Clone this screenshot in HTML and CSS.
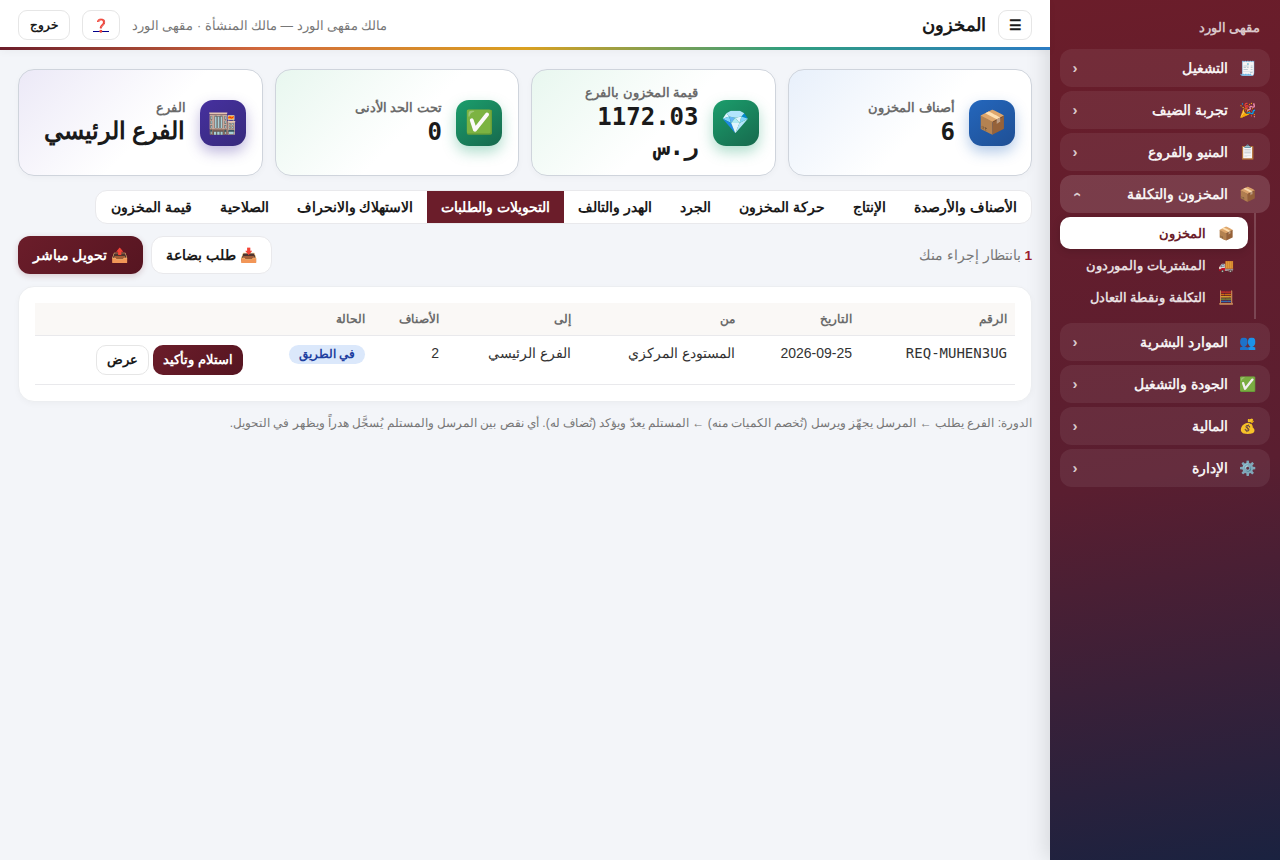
FILE: index.html
```html
<!DOCTYPE html>
<html lang="ar" dir="rtl">
<head>
    <meta charset="UTF-8">
    <meta name="viewport" content="width=device-width, initial-scale=1.0">
    <title>المخزون</title>
    <link rel="stylesheet" href="styles.css">
</head>
<body>
    <aside class="sidebar">
        <div class="brand">مقهى الورد</div>
        <nav class="nav">
            <div class="nav-group"><span class="nav-icon">🧾</span><span class="nav-label">التشغيل</span><span class="chev">‹</span></div>
            <div class="nav-group"><span class="nav-icon">🎉</span><span class="nav-label">تجربة الضيف</span><span class="chev">‹</span></div>
            <div class="nav-group"><span class="nav-icon">📋</span><span class="nav-label">المنيو والفروع</span><span class="chev">‹</span></div>
            <div class="nav-group open"><span class="nav-icon">📦</span><span class="nav-label">المخزون والتكلفة</span><span class="chev up">‹</span></div>
            <div class="subnav">
                <div class="sub-item active"><span class="sub-icon">📦</span><span>المخزون</span></div>
                <div class="sub-item"><span class="sub-icon">🚚</span><span>المشتريات والموردون</span></div>
                <div class="sub-item"><span class="sub-icon">🧮</span><span>التكلفة ونقطة التعادل</span></div>
            </div>
            <div class="nav-group"><span class="nav-icon">👥</span><span class="nav-label">الموارد البشرية</span><span class="chev">‹</span></div>
            <div class="nav-group"><span class="nav-icon">✅</span><span class="nav-label">الجودة والتشغيل</span><span class="chev">‹</span></div>
            <div class="nav-group"><span class="nav-icon">💰</span><span class="nav-label">المالية</span><span class="chev">‹</span></div>
            <div class="nav-group"><span class="nav-icon">⚙️</span><span class="nav-label">الإدارة</span><span class="chev">‹</span></div>
        </nav>
    </aside>

    <div class="main">
        <header class="topbar">
            <button class="top-btn menu-btn">☰</button>
            <h1 class="page-title">المخزون</h1>
            <div class="topbar-end">
                <span class="user-line">مالك مقهى الورد — مالك المنشأة · مقهى الورد</span>
                <a class="top-btn help-btn" href="#">❓</a>
                <button class="top-btn logout-btn">خروج</button>
            </div>
        </header>

        <main class="content">
            <section class="stats">
                <div class="stat stat-blue">
                    <div class="stat-icon icon-blue">📦</div>
                    <div class="stat-body">
                        <div class="stat-label">أصناف المخزون</div>
                        <div class="stat-value">6</div>
                    </div>
                </div>
                <div class="stat stat-green">
                    <div class="stat-icon icon-green">💎</div>
                    <div class="stat-body">
                        <div class="stat-label">قيمة المخزون بالفرع</div>
                        <div class="stat-value">1172.03 ر.س</div>
                    </div>
                </div>
                <div class="stat stat-green">
                    <div class="stat-icon icon-green">✅</div>
                    <div class="stat-body">
                        <div class="stat-label">تحت الحد الأدنى</div>
                        <div class="stat-value">0</div>
                    </div>
                </div>
                <div class="stat stat-purple">
                    <div class="stat-icon icon-purple">🏬</div>
                    <div class="stat-body">
                        <div class="stat-label">الفرع</div>
                        <div class="stat-value stat-text">الفرع الرئيسي</div>
                    </div>
                </div>
            </section>

            <div class="tabs-row">
                <div class="tabs">
                    <button class="tab">الأصناف والأرصدة</button>
                    <button class="tab">الإنتاج</button>
                    <button class="tab">حركة المخزون</button>
                    <button class="tab">الجرد</button>
                    <button class="tab">الهدر والتالف</button>
                    <button class="tab active">التحويلات والطلبات</button>
                    <button class="tab">الاستهلاك والانحراف</button>
                    <button class="tab">الصلاحية</button>
                    <button class="tab">قيمة المخزون</button>
                </div>
            </div>

            <div class="actions">
                <div class="pending"><strong>1</strong> بانتظار إجراء منك</div>
                <div class="action-btns">
                    <button class="btn btn-light">📥 طلب بضاعة</button>
                    <button class="btn btn-dark">📤 تحويل مباشر</button>
                </div>
            </div>

            <section class="card">
                <table class="table">
                    <thead>
                        <tr>
                            <th class="c-num">الرقم</th>
                            <th class="c-date">التاريخ</th>
                            <th class="c-from">من</th>
                            <th class="c-to">إلى</th>
                            <th class="c-items">الأصناف</th>
                            <th class="c-status">الحالة</th>
                            <th class="c-actions"></th>
                        </tr>
                    </thead>
                    <tbody>
                        <tr>
                            <td class="mono"><bdi>REQ-MUHEN3UG</bdi></td>
                            <td>2026-09-25</td>
                            <td>المستودع المركزي</td>
                            <td>الفرع الرئيسي</td>
                            <td>2</td>
                            <td><span class="badge">في الطريق</span></td>
                            <td>
                                <div class="row-btns">
                                    <button class="sm-btn sm-dark">استلام وتأكيد</button>
                                    <button class="sm-btn sm-light">عرض</button>
                                </div>
                            </td>
                        </tr>
                    </tbody>
                </table>
            </section>

            <p class="note">الدورة: الفرع يطلب ← المرسل يجهّز ويرسل (تُخصم الكميات منه) ← المستلم يعدّ ويؤكد (تُضاف له). أي نقص بين المرسل والمستلم يُسجَّل هدراً ويظهر في التحويل.</p>
        </main>
    </div>
</body>
</html>
```

FILE: styles.css
```css
* {
    box-sizing: border-box;
}

body {
    margin: 0;
    height: 860px;
    overflow: hidden;
    display: flex;
    font-family: "Liberation Sans", sans-serif;
    background-color: #f3f5f9;
    color: #1a1a1a;
}

button {
    font-family: inherit;
}

/* sidebar */
.sidebar {
    width: 230px;
    height: 860px;
    flex-shrink: 0;
    padding: 17px 10px 0;
    background: linear-gradient(170deg, #6b1d2a 0%, #5a1e30 55%, #1a2240 100%);
    box-shadow: -4px 0 20px rgba(0, 0, 0, 0.12);
    color: #fff;
}

.brand {
    height: 22px;
    line-height: 22px;
    margin-bottom: 10px;
    padding-right: 10px;
    font-size: 12.5px;
    font-weight: 700;
    color: rgba(255, 255, 255, 0.75);
}

.nav {
    display: flex;
    flex-direction: column;
    gap: 4px;
}

.nav-group {
    height: 38px;
    display: flex;
    align-items: center;
    padding: 0 14px 0 10px;
    border-radius: 12px;
    background-color: rgba(255, 255, 255, 0.07);
    font-size: 14px;
    font-weight: 700;
    color: rgba(255, 255, 255, 0.95);
}

.nav-group.open {
    background-color: rgba(255, 255, 255, 0.14);
}

.nav-icon {
    width: 16px;
    margin-left: 12px;
    font-size: 14px;
    text-align: center;
}

.nav-label {
    flex: 1;
}

.chev {
    width: 10px;
    padding-bottom: 2px;
    font-size: 15px;
    line-height: 1;
    text-align: center;
    color: rgba(255, 255, 255, 0.75);
}

.chev.up {
    padding-bottom: 0;
    transform: rotate(-90deg);
}

.subnav {
    display: flex;
    flex-direction: column;
    margin: -4px 14px 0 0;
    padding: 4px 6px 6px 0;
    border-right: 2px solid rgba(255, 255, 255, 0.18);
    width: 196px;
}

.sub-item {
    height: 32px;
    display: flex;
    align-items: center;
    padding: 0 14px;
    font-size: 13.4px;
    font-weight: 700;
    white-space: nowrap;
    color: rgba(255, 255, 255, 0.85);
}

.sub-icon {
    width: 16px;
    margin-left: 12px;
    font-size: 13px;
    text-align: center;
}

.sub-item.active {
    background-color: #fff;
    border-radius: 10px;
    color: #6b1d2a;
    box-shadow: 0 2px 8px rgba(0, 0, 0, 0.15);
}

/* top bar */
.main {
    flex: 1;
    min-width: 0;
}

.topbar {
    height: 50px;
    display: flex;
    align-items: center;
    padding: 3px 18px 0;
    background-color: #fff;
    border-bottom: 3px solid;
    border-image: linear-gradient(90deg, #6b1d2a 0%, #d2693c 25%, #daa020 50%, #2f9e7f 75%, #2b7bc4 100%) 1;
    box-shadow: 0 2px 8px rgba(0, 0, 0, 0.04);
}

.top-btn {
    height: 30px;
    display: flex;
    align-items: center;
    justify-content: center;
    background-color: #fff;
    border: 1px solid #e6e6e6;
    border-radius: 9px;
    color: #1a1a1a;
}

.menu-btn {
    width: 34px;
    font-size: 14px;
    font-weight: 700;
    padding: 0;
}

.page-title {
    margin: 0 12px;
    font-size: 18px;
    font-weight: 700;
}

.topbar-end {
    margin-right: auto;
    display: flex;
    align-items: center;
    gap: 12px;
}

.user-line {
    font-size: 12.5px;
    color: #777;
}

.help-btn {
    width: 38px;
    font-size: 13px;
    color: #00008b;
}

.logout-btn {
    width: 52px;
    font-size: 12px;
    font-weight: 700;
    padding: 0;
}

/* content */
.content {
    padding: 19px 18px 0;
}

.stats {
    display: grid;
    grid-template-columns: repeat(4, 1fr);
    gap: 12px;
}

.stat {
    height: 107px;
    display: flex;
    align-items: center;
    gap: 14px;
    padding: 0 16px;
    border: 1px solid #cfd4dc;
    border-radius: 16px;
    box-shadow: 0 2px 6px rgba(0, 0, 0, 0.03);
}

.stat-blue {
    background: linear-gradient(135deg, #e8f0fb 0%, #fff 55%);
}

.stat-green {
    background: linear-gradient(135deg, #e8f7ef 0%, #fff 55%);
}

.stat-purple {
    background: linear-gradient(135deg, #ece9f7 0%, #fff 55%);
}

.stat-icon {
    width: 46px;
    height: 46px;
    flex-shrink: 0;
    display: flex;
    align-items: center;
    justify-content: center;
    border-radius: 13px;
    font-size: 23px;
}

.icon-blue {
    background: linear-gradient(145deg, #2467bd, #1f4f94);
    box-shadow: 0 6px 14px rgba(36, 103, 189, 0.35);
}

.icon-green {
    background: linear-gradient(145deg, #1b9e6c, #17694d);
    box-shadow: 0 6px 14px rgba(27, 158, 108, 0.35);
}

.icon-purple {
    background: linear-gradient(145deg, #46309f, #372a7c);
    box-shadow: 0 6px 14px rgba(70, 48, 159, 0.35);
}

.stat-body {
    min-width: 0;
    flex: 1;
    padding-top: 2px;
}

.stat-label {
    margin-bottom: 1px;
    font-size: 12.8px;
    font-weight: 700;
    line-height: 16px;
    color: #6b6b6b;
}

.stat-value {
    font-family: "DejaVu Sans Mono", monospace;
    font-size: 24px;
    font-weight: 700;
    line-height: 30px;
    color: #1a1a1a;
}

.stat-text {
    font-family: "Liberation Sans", sans-serif;
    font-size: 24.3px;
    line-height: 28px;
    padding-bottom: 2px;
    white-space: nowrap;
}

/* tabs */
.tabs-row {
    display: flex;
    margin-top: 14px;
}

.tabs {
    height: 34px;
    display: flex;
    overflow: hidden;
    padding-left: 1px;
    background-color: #fff;
    border: 1px solid #e9e9ec;
    border-radius: 12px;
}

.tab {
    padding: 0 14px;
    background: none;
    border: none;
    font-size: 14px;
    font-weight: 700;
    color: #1a1a1a;
    white-space: nowrap;
}

.tab.active {
    background-color: #6b1d2a;
    color: #fff;
}

/* actions row */
.actions {
    display: flex;
    align-items: center;
    justify-content: space-between;
    margin-top: 12px;
}

.pending {
    font-size: 13.7px;
    color: #777;
}

.pending strong {
    color: #9b1c2e;
}

.action-btns {
    display: flex;
    gap: 8px;
}

.btn {
    height: 38px;
    padding: 0 14.5px;
    border-radius: 12px;
    font-size: 14px;
    font-weight: 700;
}

.btn-light {
    padding: 0 14px;
    background-color: #fff;
    border: 1px solid #e9e9ec;
    color: #1a1a1a;
}

.btn-dark {
    background: linear-gradient(135deg, #6b1d2a, #561521);
    border: none;
    color: #fff;
    box-shadow: 0 2px 6px rgba(107, 29, 42, 0.2);
}

/* table */
.card {
    margin-top: 12px;
    padding: 16px;
    background-color: #fff;
    border: 1px solid #eceef1;
    border-radius: 16px;
    box-shadow: 0 2px 6px rgba(0, 0, 0, 0.03);
}

.table {
    width: 100%;
    table-layout: fixed;
    border-collapse: collapse;
}

.table th {
    height: 32px;
    padding: 0 8px;
    background-color: #faf8f6;
    border-bottom: 1px solid #e9e9ec;
    font-size: 12px;
    font-weight: 700;
    color: #6b6b6b;
    text-align: right;
}

.table td {
    height: 49px;
    padding: 9px 8px 0;
    border-bottom: 1px solid #e9e9ec;
    font-size: 14px;
    color: #333;
    vertical-align: top;
}

.c-num { width: 155px; }
.c-date { width: 117px; }
.c-from { width: 164px; }
.c-to { width: 132px; }
.c-items { width: 74px; }
.c-status { width: 122px; }

.table .mono {
    font-family: "DejaVu Sans Mono", monospace;
    font-size: 14px;
}

.badge {
    display: inline-block;
    height: 19px;
    line-height: 19px;
    padding: 0 10px;
    border-radius: 10px;
    background-color: #dbe8fb;
    color: #1e3fa0;
    font-size: 12px;
    font-weight: 700;
}

.row-btns {
    display: flex;
    gap: 4px;
}

.sm-btn {
    height: 30px;
    padding: 0 10px;
    border-radius: 10px;
    font-size: 13px;
    font-weight: 700;
}

.sm-dark {
    background: linear-gradient(135deg, #6b1d2a, #561521);
    border: none;
    color: #fff;
}

.sm-light {
    background-color: #fff;
    border: 1px solid #e6e6e6;
    color: #1a1a1a;
}

.note {
    margin: 12px 0 0;
    font-size: 12px;
    line-height: 18px;
    color: #777;
}
```
